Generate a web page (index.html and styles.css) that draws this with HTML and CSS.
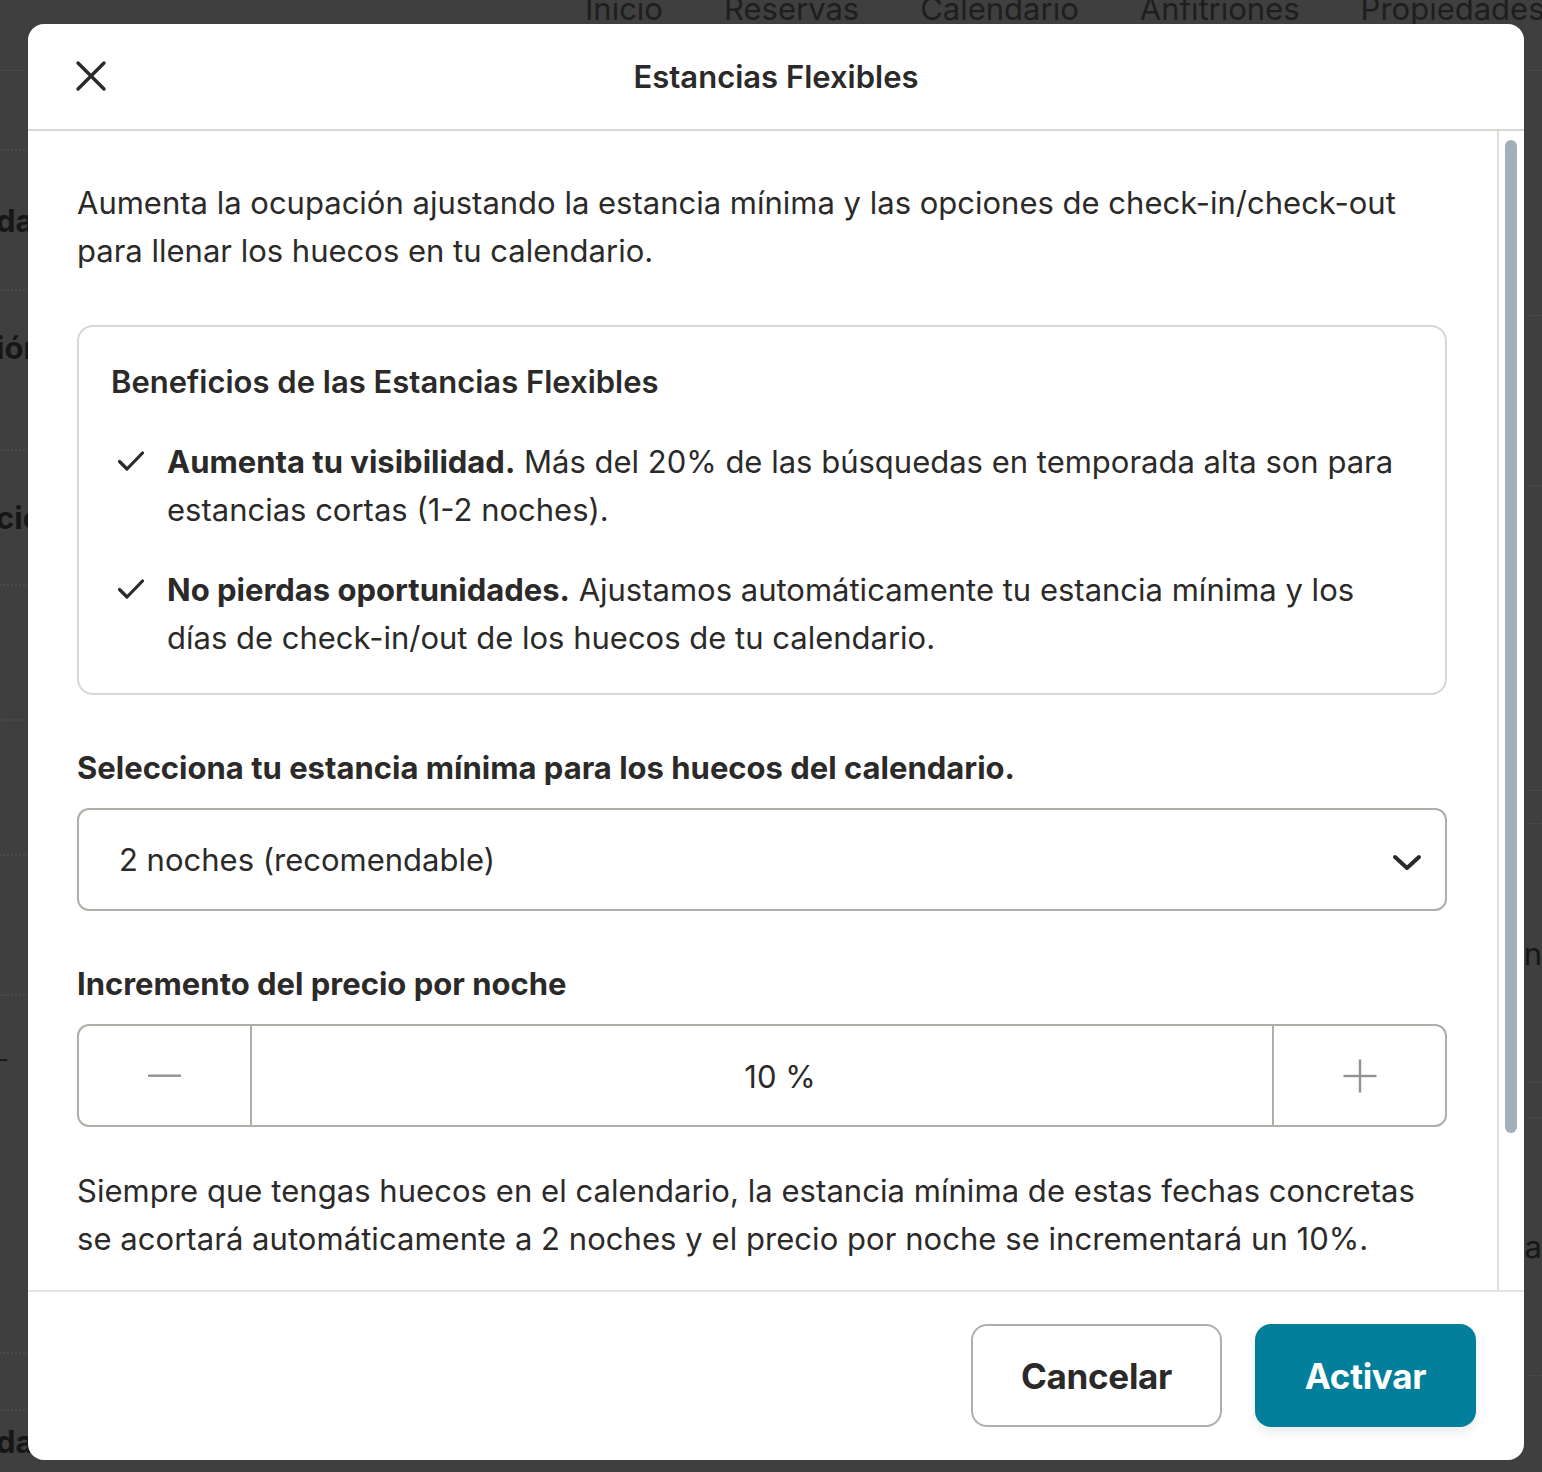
FILE: index.html
```html
<!DOCTYPE html>
<html lang="es">
<head>
<meta charset="utf-8">
<title>Estancias Flexibles</title>
<link rel="stylesheet" href="styles.css">
</head>
<body>
<div class="page">
  <nav class="bg-nav">
    <span>Inicio</span><span>Reservas</span><span>Calendario</span><span>Anfitriones</span><span>Propiedades</span>
  </nav>
  <div class="bg-main">
    <div class="bg-side">
      <div class="bg-row r1"></div>
      <div class="bg-row r2"><b>da</b></div>
      <div class="bg-row r3"><b>ión</b></div>
      <div class="bg-row r4"><b>ció</b></div>
      <div class="bg-row r5"></div>
      <div class="bg-row r6"></div>
      <div class="bg-row r7"></div>
      <div class="bg-row r8"><span class="dash">–</span></div>
      <div class="bg-row r9"></div>
      <div class="bg-row r10"><b>da</b></div>
    </div>
    <div class="bg-right">
      <div class="bg-rrow q1"></div>
      <div class="bg-rrow q2"></div>
      <div class="bg-rrow q3"></div>
      <div class="bg-rrow q4"></div>
      <div class="bg-rrow q5"><span>in</span></div>
      <div class="bg-rrow q6"></div>
      <div class="bg-rrow q7"><span>ga</span></div>
      <div class="bg-rrow q8"></div>
    </div>
  </div>

  <div class="modal" role="dialog" aria-labelledby="modal-title">
    <header class="modal-header">
      <button class="close" aria-label="Cerrar">
        <svg width="32" height="32" viewBox="0 0 32 32"><path d="M3 3 L29 29 M29 3 L3 29" stroke="#2b2a29" stroke-width="3.4" stroke-linecap="round" fill="none"/></svg>
      </button>
      <h1 id="modal-title" class="title">Estancias Flexibles</h1>
      <span></span>
    </header>

    <div class="modal-body">
      <div class="content">
        <p class="intro">Aumenta la ocupación ajustando la estancia mínima y las opciones de check-in/check-out para llenar los huecos en tu calendario.</p>

        <section class="benefits">
          <h2 class="benefits-title">Beneficios de las Estancias Flexibles</h2>
          <ul class="benefit-list">
            <li class="benefit">
              <svg class="check" width="28" height="22" viewBox="0 0 28 22"><path d="M2.5 11.5 L10 19 L25.5 3" stroke="#2b2a29" stroke-width="3.2" stroke-linecap="round" stroke-linejoin="round" fill="none"/></svg>
              <p><strong>Aumenta tu visibilidad.</strong> Más del 20% de las búsquedas en temporada alta son para estancias cortas (1-2 noches).</p>
            </li>
            <li class="benefit">
              <svg class="check" width="28" height="22" viewBox="0 0 28 22"><path d="M2.5 11.5 L10 19 L25.5 3" stroke="#2b2a29" stroke-width="3.2" stroke-linecap="round" stroke-linejoin="round" fill="none"/></svg>
              <p><strong>No pierdas oportunidades.</strong> Ajustamos automáticamente tu estancia mínima y los días de check-in/out de los huecos de tu calendario.</p>
            </li>
          </ul>
        </section>

        <h3 class="field-label">Selecciona tu estancia mínima para los huecos del calendario.</h3>
        <div class="select">
          <span>2 noches (recomendable)</span>
          <svg class="chevron" width="30" height="18" viewBox="0 0 30 18"><path d="M3 3 L15 14 L27 3" stroke="#2b2a29" stroke-width="4" stroke-linecap="round" stroke-linejoin="round" fill="none"/></svg>
        </div>

        <h3 class="field-label">Incremento del precio por noche</h3>
        <div class="stepper">
          <button class="step" aria-label="Disminuir">
            <svg width="34" height="4" viewBox="0 0 34 4"><rect x="0" y="0.5" width="33" height="2.4" fill="#949290"/></svg>
          </button>
          <div class="step-value">10 %</div>
          <button class="step" aria-label="Aumentar">
            <svg width="34" height="34" viewBox="0 0 34 34"><rect x="0.5" y="15.8" width="33" height="2.4" fill="#949290"/><rect x="15.8" y="0.5" width="2.4" height="33" fill="#949290"/></svg>
          </button>
        </div>

        <p class="summary">Siempre que tengas huecos en el calendario, la estancia mínima de estas fechas concretas se acortará automáticamente a 2 noches y el precio por noche se incrementará un 10%.</p>
      </div>
      <div class="scrollbar"><div class="thumb"></div></div>
    </div>

    <footer class="modal-footer">
      <button class="btn btn-secondary">Cancelar</button>
      <button class="btn btn-primary">Activar</button>
    </footer>
  </div>
</div>
</body>
</html>
```

FILE: styles.css
```css
* { box-sizing: border-box; }

html, body {
  margin: 0;
  padding: 0;
}

body {
  background: #3f3f3f;
  font-family: Inter, "Noto Sans", "Liberation Sans", sans-serif;
  color: #2b2a29;
}

.page {
  position: relative;
  width: 1542px;
  height: 1472px;
  overflow: hidden;
}

/* ---- dimmed page behind the overlay ---- */
.bg-nav {
  display: flex;
  align-items: flex-start;
  gap: 61px;
  padding-left: 585px;
  height: 70px;
  font-size: 31px;
  color: #1e1e1e;
  line-height: 50px;
  white-space: nowrap;
}

.bg-nav span { margin-top: -16px; }

.bg-main {
  display: flex;
  justify-content: space-between;
  border-top: 1px solid #474747;
}

.bg-side {
  width: 40px;
  display: flex;
  flex-direction: column;
  font-size: 31px;
  color: #161616;
}

.bg-side b { font-weight: 700; margin-left: -4px; }

.bg-row {
  border-bottom: 2px dotted #4a4a4a;
  display: flex;
  align-items: center;
  overflow: hidden;
}
.r1 { height: 80px; }
.r2 { height: 140px; }
.r3 { height: 160px; align-items: flex-start; padding-top: 38px; }
.r4 { height: 135px; }
.r5 { height: 135px; }
.r6 { height: 135px; }
.r7 { height: 140px; }
.r8 { height: 358px; align-items: flex-start; padding-top: 50px; }
.r9 { height: 57px; }
.r10 { height: 70px; border-bottom: none; align-items: flex-start; padding-top: 12px; }
.dash { font-size: 22px; margin-left: -4px; }

.bg-right {
  width: 40px;
  display: flex;
  flex-direction: column;
  font-size: 31px;
  color: #161616;
}
.bg-rrow {
  border-bottom: 1px dashed #4c4c4c;
  display: flex;
  align-items: center;
  justify-content: flex-end;
  overflow: hidden;
}
.q1 { height: 245px; }
.q2 { height: 170px; }
.q3 { height: 305px; }
.q4 { height: 33px; }
.q5 { height: 259px; }
.q6 { height: 35px; }
.q7 { height: 258px; }
.q8 { height: 100px; border-bottom: none; }

/* ---- modal ---- */
.modal {
  position: absolute;
  left: 28px;
  top: 24px;
  width: 1496px;
  height: 1436px;
  background: #fff;
  border-radius: 16px;
  display: flex;
  flex-direction: column;
  overflow: hidden;
}

.modal-header {
  height: 107px;
  flex: none;
  display: grid;
  grid-template-columns: 1fr auto 1fr;
  align-items: center;
  padding: 0 46px;
  border-bottom: 2px solid #d9d5d1;
}

.close {
  width: 34px;
  height: 34px;
  padding: 0;
  border: none;
  background: none;
  display: flex;
  align-items: center;
  justify-content: center;
  margin-top: -2px;
}

.title {
  margin: 0;
  font-size: 31px;
  font-weight: 600;
  color: #2b2a29;
  letter-spacing: 0;
}

.modal-body {
  flex: 1;
  min-height: 0;
  display: flex;
  border-bottom: 2px solid #e6e3e0;
}

.content {
  flex: 1;
  padding: 48px 50px 0 49px;
  overflow: hidden;
  font-size: 31px;
  line-height: 48px;
}

.intro {
  margin: 0;
}

.benefits {
  margin-top: 50px;
  border: 2px solid #d9d5d1;
  border-radius: 16px;
  padding: 31px 32px 31px 32px;
}

.benefits-title {
  margin: 0;
  font-size: 31px;
  font-weight: 600;
  line-height: 48px;
}

.benefit-list {
  list-style: none;
  margin: 0;
  padding: 0;
}

.benefit {
  display: flex;
  align-items: flex-start;
  margin-top: 32px;
}

.benefit p { margin: 0; }
.benefit strong { font-weight: 700; }

.check {
  flex: none;
  margin: 12px 22px 0 6px;
}

.field-label {
  margin: 49px 0 16px;
  font-size: 31px;
  font-weight: 700;
  line-height: 48px;
}

.select {
  height: 103px;
  border: 2px solid #b1ada9;
  border-radius: 12px;
  display: flex;
  align-items: center;
  justify-content: space-between;
  padding: 0 23px 0 40px;
}

.chevron { margin-top: 6px; }

.stepper {
  height: 103px;
  border: 2px solid #b1ada9;
  border-radius: 12px;
  display: flex;
}

.step {
  width: 173px;
  flex: none;
  border: none;
  background: none;
  padding: 0;
  display: flex;
  align-items: center;
  justify-content: center;
}

.step:first-child { border-right: 2px solid #b1ada9; }
.step:last-child { border-left: 2px solid #b1ada9; }

.step-value {
  flex: 1;
  display: flex;
  align-items: center;
  justify-content: center;
  font-size: 31px;
  padding: 2px 0 0 36px;
}

.summary {
  margin: 40px 0 0;
  letter-spacing: 0.05px;
}

.scrollbar {
  width: 27px;
  flex: none;
  border-left: 2px solid #e0dddb;
  padding: 9px 0 0 6px;
}

.thumb {
  width: 12px;
  height: 993px;
  border-radius: 6px;
  background: #a3afb9;
}

.modal-footer {
  flex: none;
  height: 168px;
  display: flex;
  justify-content: flex-end;
  align-items: flex-start;
  gap: 33px;
  padding: 32px 48px 0 0;
}

.btn {
  height: 103px;
  border-radius: 16px;
  font-family: Inter, "Noto Sans", sans-serif;
  font-size: 35px;
  font-weight: 700;
  letter-spacing: -0.3px;
  cursor: pointer;
}

.btn-secondary {
  width: 251px;
  background: #fff;
  border: 2px solid #b1ada9;
  color: #2b2a29;
}

.btn-primary {
  width: 221px;
  background: #037f9c;
  border: none;
  color: #fff;
  box-shadow: 0 6px 12px rgba(0, 0, 0, 0.08);
}
```
